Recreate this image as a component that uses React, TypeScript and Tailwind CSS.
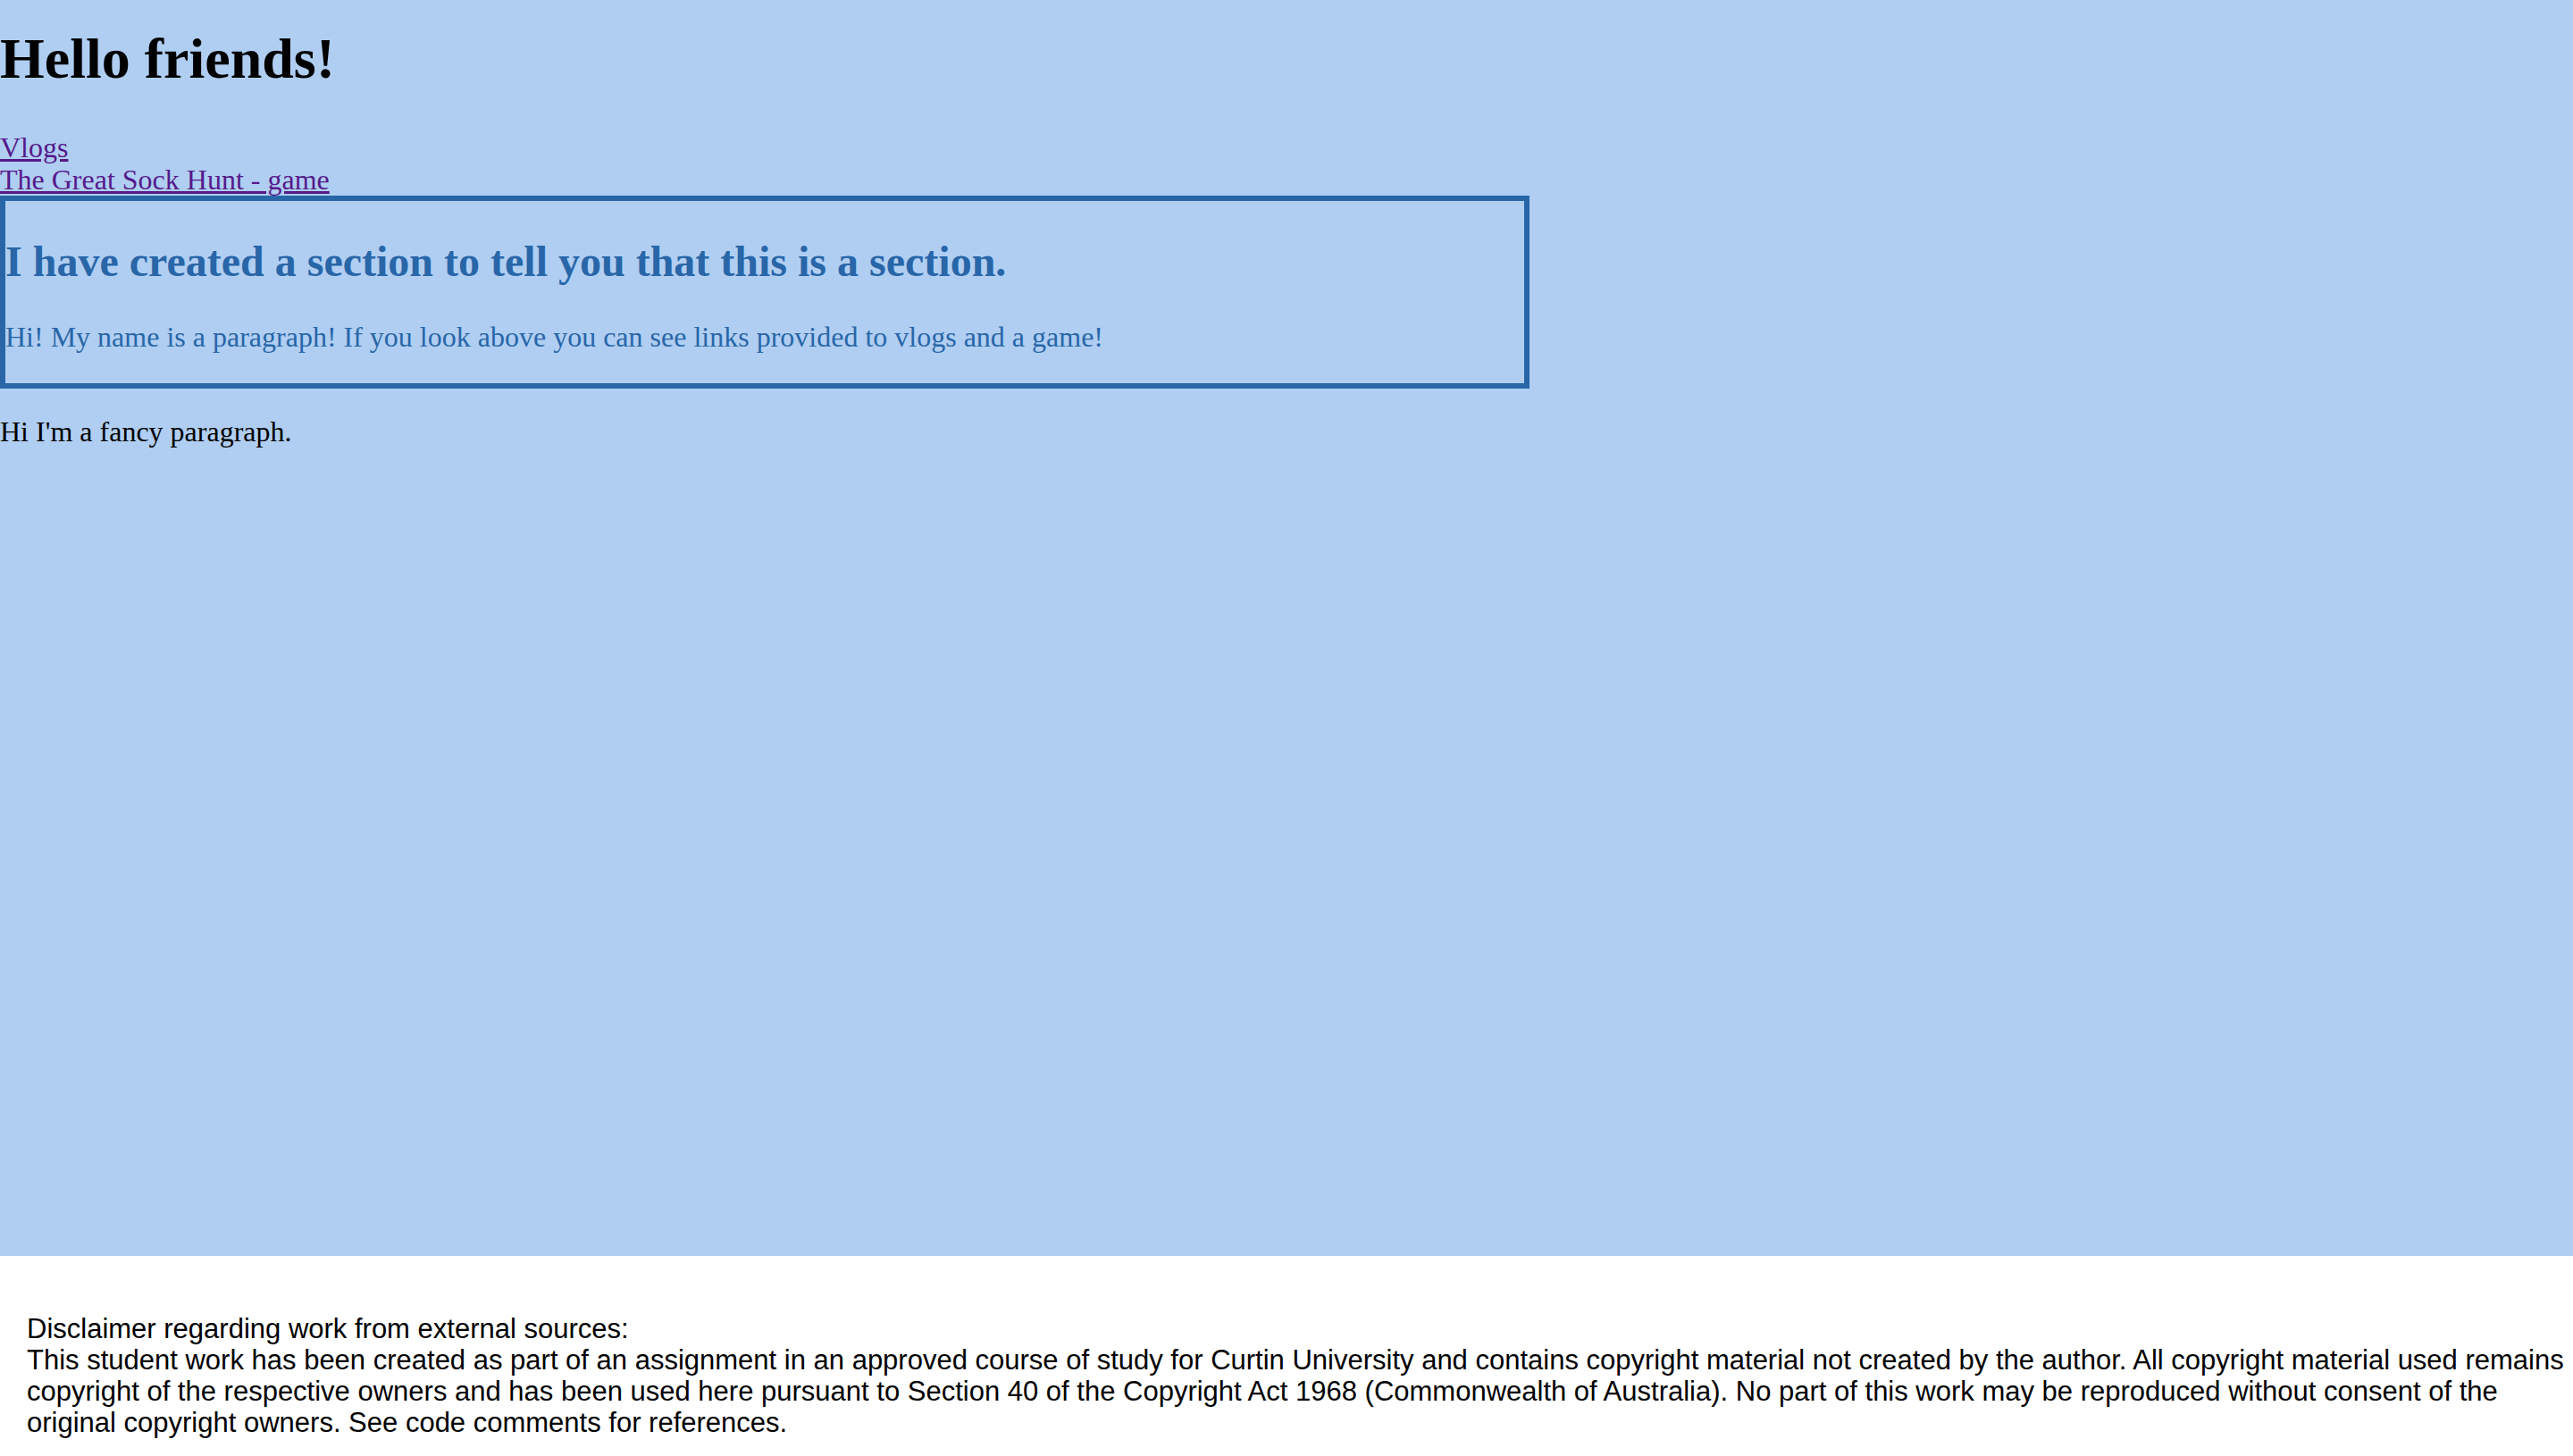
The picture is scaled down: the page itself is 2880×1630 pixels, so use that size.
import React from 'react';

const App: React.FC = () => {
  return (
    <div className="min-h-screen bg-white">
      {/* Main page area */}
      <main className="h-[1406px] bg-[#b0cef2] pt-[29px] font-['Liberation_Serif',serif] text-black">
        <h1 className="text-[64px] leading-[74px] font-bold">Hello friends!</h1>

        <nav className="mt-[44px] flex flex-col items-start text-[32px] leading-[36px]">
          <a href="#vlogs" className="text-[#551a8b] underline">
            Vlogs
          </a>
          <a href="#game" className="text-[#551a8b] underline">
            The Great Sock Hunt - game
          </a>
        </nav>

        <section className="w-[1712px] border-[6px] border-[#2866a8] text-[#2866a8]">
          <h2 className="mt-[40px] text-[48px] leading-[56px] font-bold">
            I have created a section to tell you that this is a section.
          </h2>
          <p className="mt-[38px] mb-[34px] text-[32px] leading-[36px]">
            Hi! My name is a paragraph! If you look above you can see links provided to vlogs and a game!
          </p>
        </section>

        <p className="mt-[30px] text-[32px] leading-[36px]">Hi I'm a fancy paragraph.</p>
      </main>

      {/* Footer */}
      <footer className="pt-[64px] pl-[30px] pb-[40px] font-['Liberation_Sans',Arial,sans-serif] text-[31px] leading-[35px] text-black">
        <p>Disclaimer regarding work from external sources:</p>
        <p>
          This student work has been created as part of an assignment in an approved course of study for Curtin
          University and contains copyright material not created by the author. All copyright material used remains
          copyright of the respective owners and has been used here pursuant to Section 40 of the Copyright Act 1968
          (Commonwealth of Australia). No part of this work may be reproduced without consent of the original copyright
          owners. See code comments for references.
        </p>
      </footer>
    </div>
  );
};

export default App;
